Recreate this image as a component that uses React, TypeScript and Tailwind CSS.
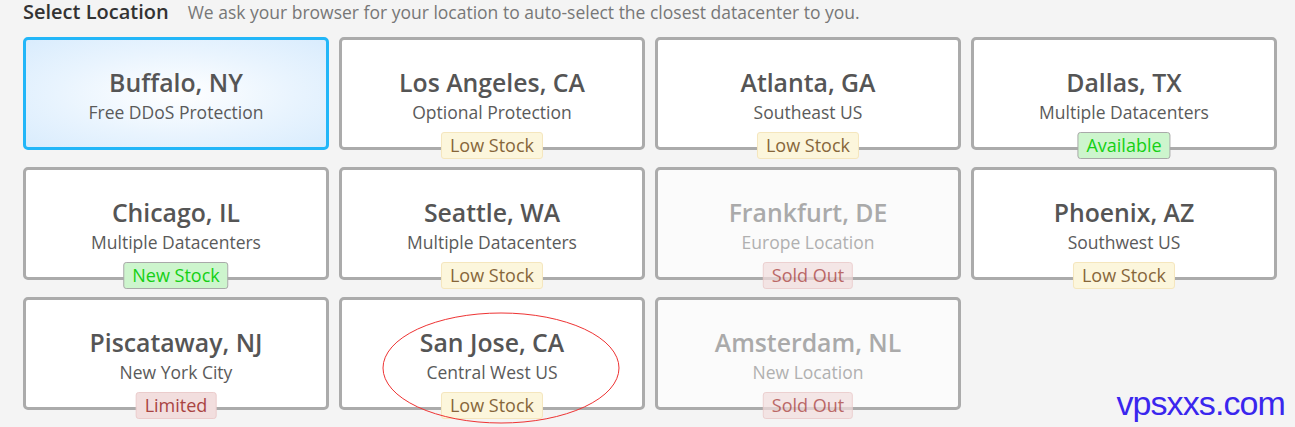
type Badge = "low" | "available" | "new" | "limited" | "sold";

type Loc = {
  city: string;
  note: string;
  badge?: Badge;
  selected?: boolean;
  disabled?: boolean;
};

const locations: Loc[] = [
  { city: "Buffalo, NY", note: "Free DDoS Protection", selected: true },
  { city: "Los Angeles, CA", note: "Optional Protection", badge: "low" },
  { city: "Atlanta, GA", note: "Southeast US", badge: "low" },
  { city: "Dallas, TX", note: "Multiple Datacenters", badge: "available" },
  { city: "Chicago, IL", note: "Multiple Datacenters", badge: "new" },
  { city: "Seattle, WA", note: "Multiple Datacenters", badge: "low" },
  { city: "Frankfurt, DE", note: "Europe Location", badge: "sold", disabled: true },
  { city: "Phoenix, AZ", note: "Southwest US", badge: "low" },
  { city: "Piscataway, NJ", note: "New York City", badge: "limited" },
  { city: "San Jose, CA", note: "Central West US", badge: "low" },
  { city: "Amsterdam, NL", note: "New Location", badge: "sold", disabled: true },
];

const badgeText: Record<Badge, string> = {
  low: "Low Stock",
  available: "Available",
  new: "New Stock",
  limited: "Limited",
  sold: "Sold Out",
};

const badgeClass: Record<Badge, string> = {
  low: "bg-[#fcf6dc] border-[#f5e6bd] text-[#86663a]",
  available: "bg-[#cdf5cd] border-[#a9a9a9] text-[#14d014]",
  new: "bg-[#cdf5cd] border-[#a9a9a9] text-[#14d014]",
  limited: "bg-[#f2dede] border-[#ebcccc] text-[#a94442]",
  sold: "bg-[#f2dede]/80 border-[#ebcccc] text-[#b55a58]",
};

function Card({ loc }: { loc: Loc }) {
  const frame = loc.selected
    ? "border-[#22b6f8] bg-[radial-gradient(ellipse_at_center,#ffffff_0%,#e9f4fe_55%,#d9ecfd_100%)]"
    : loc.disabled
      ? "border-[#ababab] bg-[#fbfbfb]"
      : "border-[#ababab] bg-white";
  const title = loc.disabled ? "text-[#aaaaaa]" : "text-[#555555]";
  const note = loc.disabled ? "text-[#b0b0b0]" : "text-[#5a5a5a]";

  return (
    <div className={`relative h-[113px] rounded-[5px] border-[3px] ${frame} text-center`}>
      <div className={`pt-[26px] text-[24.8px] leading-[32px] font-semibold ${title}`}>{loc.city}</div>
      <div className={`mt-[3px] text-[17.5px] leading-[22px] ${note}`}>{loc.note}</div>
      {loc.badge && (
        <span
          className={`absolute left-1/2 -translate-x-1/2 bottom-[-12px] h-[27px] px-[8px] rounded-[3px] border text-[18px] leading-[25px] whitespace-nowrap ${badgeClass[loc.badge]} ${loc.disabled ? "opacity-90" : ""}`}
        >
          {badgeText[loc.badge]}
        </span>
      )}
    </div>
  );
}

export default function App() {
  return (
    <div
      className="relative w-[1295px] h-[427px] overflow-hidden bg-[#f4f4f4] pl-[23px]"
      style={{ fontFamily: '"Open Sans", "Noto Sans", sans-serif' }}
    >
      <div className="flex items-baseline gap-[19px] leading-[24px]">
        <span className="text-[20px] font-semibold text-[#333333]">Select Location</span>
        <span className="text-[17.5px] text-[#777777]">
          We ask your browser for your location to auto-select the closest datacenter to you.
        </span>
      </div>

      <div className="mt-[13px] grid grid-cols-[repeat(4,306px)] gap-x-[10px] gap-y-[17px]">
        {locations.map((loc) => (
          <Card key={loc.city} loc={loc} />
        ))}
      </div>

      {/* hand-drawn highlight around San Jose */}
      <svg className="absolute left-0 top-0 pointer-events-none" width="1295" height="427">
        <ellipse cx="501" cy="368" rx="118" ry="55" fill="none" stroke="#ee3333" strokeWidth="1" />
      </svg>

      <div
        className="absolute right-[10px] bottom-[-2px] text-[34px] tracking-[-0.9px] text-[#3a26ee]"
        style={{ fontFamily: '"Liberation Sans", Arial, sans-serif' }}
      >
        vpsxxs.com
      </div>
    </div>
  );
}
